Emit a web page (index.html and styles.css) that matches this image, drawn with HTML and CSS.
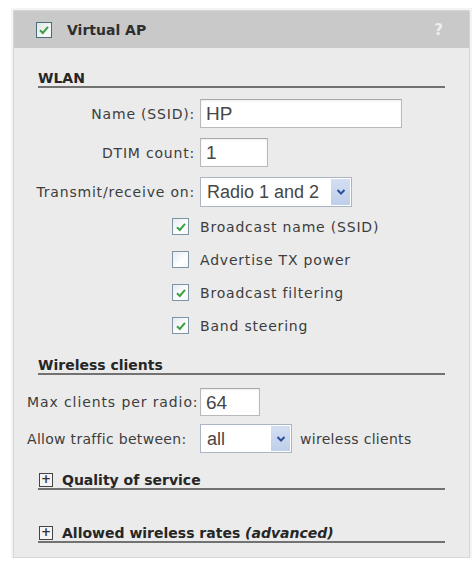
FILE: index.html
```html
<!DOCTYPE html>
<html>
<head>
<meta charset="utf-8">
<link rel="stylesheet" href="styles.css">
</head>
<body>
<div class="panel">
  <div class="header">
    <span class="cb cb-head">
      <svg viewBox="0 0 16 16" width="16" height="16"><path d="M4 8.2 L6.8 11 L12 4.8" fill="none" stroke="#3c9f45" stroke-width="2"/></svg>
    </span>
    <span class="title">Virtual AP</span>
    <span class="help">?</span>
  </div>

  <div class="heading h-wlan"><span>WLAN</span></div>

  <div class="form form-right">
    <label class="lbl">Name (SSID):</label>
    <div class="field"><div class="input w-name">HP</div></div>
    <label class="lbl">DTIM count:</label>
    <div class="field"><div class="input w-dtim">1</div></div>
    <label class="lbl">Transmit/receive on:</label>
    <div class="field">
      <div class="select w-radio"><span class="sel-text">Radio 1 and 2</span><span class="arrow"><svg viewBox="0 0 10 8" width="10" height="8"><path d="M1.5 2 L5 5.5 L8.5 2" fill="none" stroke="#2b4e9e" stroke-width="2"/></svg></span></div>
    </div>
  </div>

  <div class="checks">
    <div class="chk-row"><span class="cb"><svg viewBox="0 0 16 16" width="16" height="16"><path d="M4 8.2 L6.8 11 L12 4.8" fill="none" stroke="#3c9f45" stroke-width="2"/></svg></span><span class="chk-lbl">Broadcast name (SSID)</span></div>
    <div class="chk-row"><span class="cb"></span><span class="chk-lbl">Advertise TX power</span></div>
    <div class="chk-row"><span class="cb"><svg viewBox="0 0 16 16" width="16" height="16"><path d="M4 8.2 L6.8 11 L12 4.8" fill="none" stroke="#3c9f45" stroke-width="2"/></svg></span><span class="chk-lbl">Broadcast filtering</span></div>
    <div class="chk-row"><span class="cb"><svg viewBox="0 0 16 16" width="16" height="16"><path d="M4 8.2 L6.8 11 L12 4.8" fill="none" stroke="#3c9f45" stroke-width="2"/></svg></span><span class="chk-lbl">Band steering</span></div>
  </div>

  <div class="heading h-clients"><span>Wireless clients</span></div>

  <div class="form form-left">
    <label class="lbl lbl-max">Max clients per radio:</label>
    <div class="field"><div class="input w-max">64</div></div>
    <label class="lbl">Allow traffic between:</label>
    <div class="field">
      <div class="select w-all"><span class="sel-text">all</span><span class="arrow"><svg viewBox="0 0 10 8" width="10" height="8"><path d="M1.5 2 L5 5.5 L8.5 2" fill="none" stroke="#2b4e9e" stroke-width="2"/></svg></span></div>
      <span class="after">wireless clients</span>
    </div>
  </div>

  <div class="heading h-qos"><span class="plus">+</span><span>Quality of service</span></div>
  <div class="heading h-rates"><span class="plus">+</span><span>Allowed wireless rates <em>(advanced)</em></span></div>
</div>
</body>
</html>
```

FILE: styles.css
```css
html, body {
  margin: 0;
  padding: 0;
  background: #ffffff;
}

body {
  font-family: "DejaVu Sans", Verdana, sans-serif;
  color: #3b3b3b;
}

.panel {
  margin: 10px 0 0 13px;
  width: 457px;
  height: 548px;
  box-sizing: border-box;
  border: 1px solid #d6d6d6;
  background: #ebebeb;
  box-shadow: 0 0 0 2px #f4f4f4;
}

.header {
  height: 37px;
  background: #c9c9c9;
  display: flex;
  align-items: center;
  padding: 0 26px 0 22px;
}

.cb {
  width: 16px;
  height: 16px;
  box-sizing: border-box;
  border: 1px solid #7e93a3;
  background: linear-gradient(135deg, #e6e9ee 0%, #ffffff 60%, #f3f5f8 100%);
  display: inline-flex;
  align-items: center;
  justify-content: center;
  flex: none;
}

.cb svg {
  display: block;
  margin: -1px;
}

.cb-head {
  border-color: #4b6b78;
  background: linear-gradient(135deg, #dfe6e6 0%, #f6f8f8 70%);
}

.title {
  margin-left: 15px;
  font-weight: bold;
  font-size: 14px;
  color: #2e2e2e;
  flex: 1;
}

.help {
  font-weight: bold;
  font-size: 15px;
  color: #eeeeee;
}

.heading {
  margin: 0 24px 0 24px;
  border-bottom: 2px solid #727272;
  height: 16px;
  font-weight: bold;
  font-size: 14px;
  line-height: 16px;
  color: #262626;
  display: flex;
  align-items: center;
}

.heading em {
  font-style: italic;
}

.h-wlan { margin-top: 22px; }
.h-clients { margin-top: 15px; }
.h-qos { margin-top: 19px; }
.h-rates { margin-top: 35px; }

.plus {
  width: 14px;
  height: 14px;
  box-sizing: border-box;
  border: 1px solid #444;
  background: #f4f4f4;
  font-size: 12px;
  line-height: 11px;
  text-align: center;
  font-weight: bold;
  color: #333;
  margin-left: 1px;
  margin-right: 9px;
  flex: none;
}

.form {
  display: grid;
  grid-template-columns: 181px 1fr;
  column-gap: 5px;
  align-items: center;
}

.form-right {
  margin-top: 11px;
  row-gap: 10px;
}

.form-right .lbl {
  text-align: right;
}

.form-left {
  margin-top: 13px;
  row-gap: 8px;
  grid-template-columns: 168px 1fr;
  padding-left: 13px;
}

.lbl, .chk-lbl, .after {
  font-size: 14px;
  letter-spacing: 0.8px;
  color: #3d3d3d;
  white-space: nowrap;
}

.form-left .lbl {
  letter-spacing: 0.3px;
}

.form-left .lbl-max {
  letter-spacing: 0.9px;
}

.field {
  display: flex;
  align-items: center;
}

.input {
  height: 29px;
  box-sizing: border-box;
  border: 1px solid #b9b9b9;
  border-top-color: #a9a9a9;
  background: #ffffff;
  box-shadow: inset 0 1px 2px rgba(0,0,0,0.08);
  font-family: "Liberation Sans", Arial, sans-serif;
  font-size: 19px;
  line-height: 27px;
  padding-left: 5px;
  color: #474747;
}

.w-name { width: 202px; }
.w-dtim { width: 68px; }
.w-max { width: 60px; height: 28px; }

.select {
  height: 30px;
  box-sizing: border-box;
  border: 1px solid #aab4c4;
  background: #ffffff;
  display: flex;
  align-items: stretch;
  font-family: "Liberation Sans", Arial, sans-serif;
  font-size: 18px;
  color: #474747;
}

.w-radio { width: 152px; }
.w-all { width: 92px; height: 29px; }

.sel-text {
  flex: 1;
  line-height: 28px;
  padding-left: 6px;
  white-space: nowrap;
}

.arrow {
  width: 19px;
  margin: 1px;
  background: linear-gradient(#d3def1, #bfcfea);
  display: flex;
  align-items: center;
  justify-content: center;
}

.arrow svg { display: block; }

.after {
  margin-left: 8px;
  letter-spacing: 0.3px;
}

.checks {
  margin-top: 3px;
  padding-left: 158px;
  display: flex;
  flex-direction: column;
}

.chk-row {
  height: 33px;
  display: flex;
  align-items: center;
}

.chk-row .cb {
  width: 17px;
  height: 17px;
}

.chk-lbl {
  margin-left: 11px;
}
```
